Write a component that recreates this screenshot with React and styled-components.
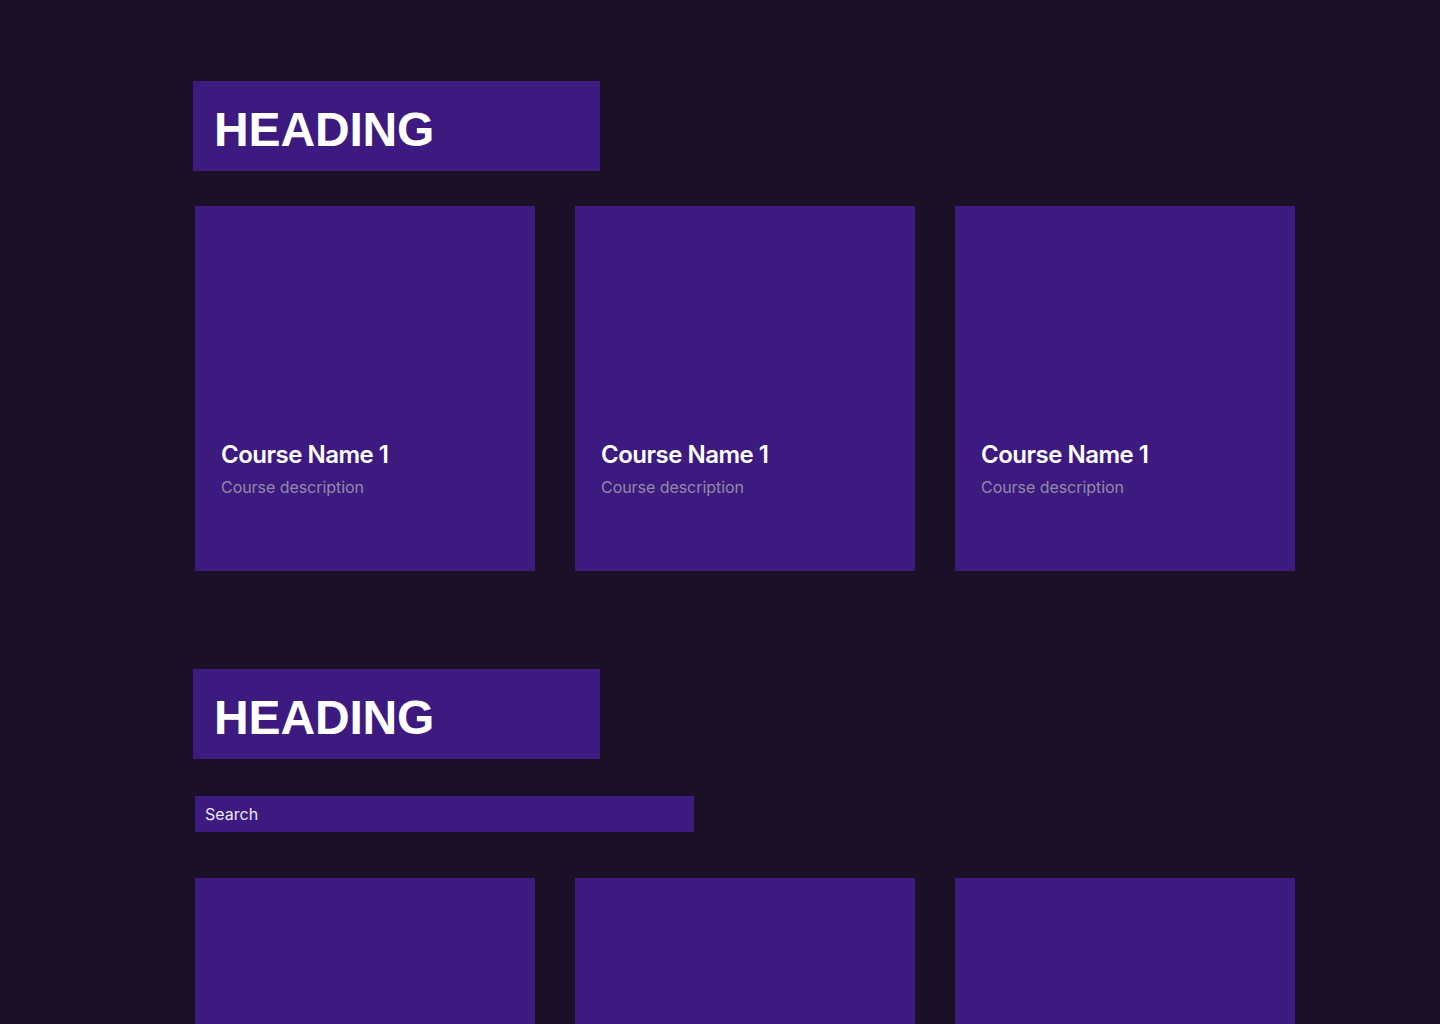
import React from "react";
import styled, { createGlobalStyle } from "styled-components";

const GlobalStyle = createGlobalStyle`
  html, body {
    margin: 0;
    padding: 0;
    background-color: #1a1126;
    font-family: Inter, "Noto Sans", sans-serif;
  }
`;

const courses = [
  { name: "Course Name 1", description: "Course description" },
  { name: "Course Name 1", description: "Course description" },
  { name: "Course Name 1", description: "Course description" },
];

export default function App() {
  return (
    <>
      <GlobalStyle />
      <Page>
        <Section>
          <Heading>HEADING</Heading>
          <Grid>
            {courses.map((c, i) => (
              <Card key={i}>
                <CardTitle>{c.name}</CardTitle>
                <CardText>{c.description}</CardText>
              </Card>
            ))}
          </Grid>
        </Section>
        <Section second>
          <Heading>HEADING</Heading>
          <Search placeholder="Search" />
          <Grid spaced>
            {courses.map((c, i) => (
              <Card key={i}>
                <CardTitle>{c.name}</CardTitle>
                <CardText>{c.description}</CardText>
              </Card>
            ))}
          </Grid>
        </Section>
      </Page>
    </>
  );
}

const Page = styled.main`
  min-height: 100vh;
  padding: 81px 0 0 193px;
  box-sizing: border-box;
`;

const Section = styled.section`
  display: flex;
  flex-direction: column;
  align-items: flex-start;
  margin-top: ${(p) => (p.second ? "98px" : "0")};
`;

const Heading = styled.h1`
  margin: 0;
  width: 407px;
  height: 90px;
  box-sizing: border-box;
  padding: 21px 0 0 21px;
  background-color: #3c1a80;
  color: #ffffff;
  font-family: "Liberation Sans", Arial, sans-serif;
  font-weight: 700;
  font-size: 48px;
  line-height: 56px;
  letter-spacing: -0.15px;
`;

const Grid = styled.div`
  display: grid;
  grid-template-columns: repeat(3, 340px);
  gap: 40px;
  margin: ${(p) => (p.spaced ? "46px" : "35px")} 0 0 2px;
`;

const Card = styled.article`
  height: 365px;
  box-sizing: border-box;
  padding: 234px 26px 0;
  background-color: #3c1a80;
  display: flex;
  flex-direction: column;
`;

const CardTitle = styled.h3`
  margin: 0;
  color: #ffffff;
  font-size: 24px;
  font-weight: 600;
  line-height: 29px;
  letter-spacing: -0.5px;
`;

const CardText = styled.p`
  margin: 8px 0 0;
  color: #948aa6;
  font-size: 16px;
  line-height: 20px;
  letter-spacing: -0.05px;
`;

const Search = styled.input`
  margin: 37px 0 0 2px;
  width: 499px;
  height: 36px;
  box-sizing: border-box;
  border: none;
  outline: none;
  padding: 0 10px;
  background-color: #3c1a80;
  color: #ffffff;
  font-family: Inter, "Noto Sans", sans-serif;
  font-size: 16px;
  &::placeholder {
    color: #ece8f4;
  }
`;
